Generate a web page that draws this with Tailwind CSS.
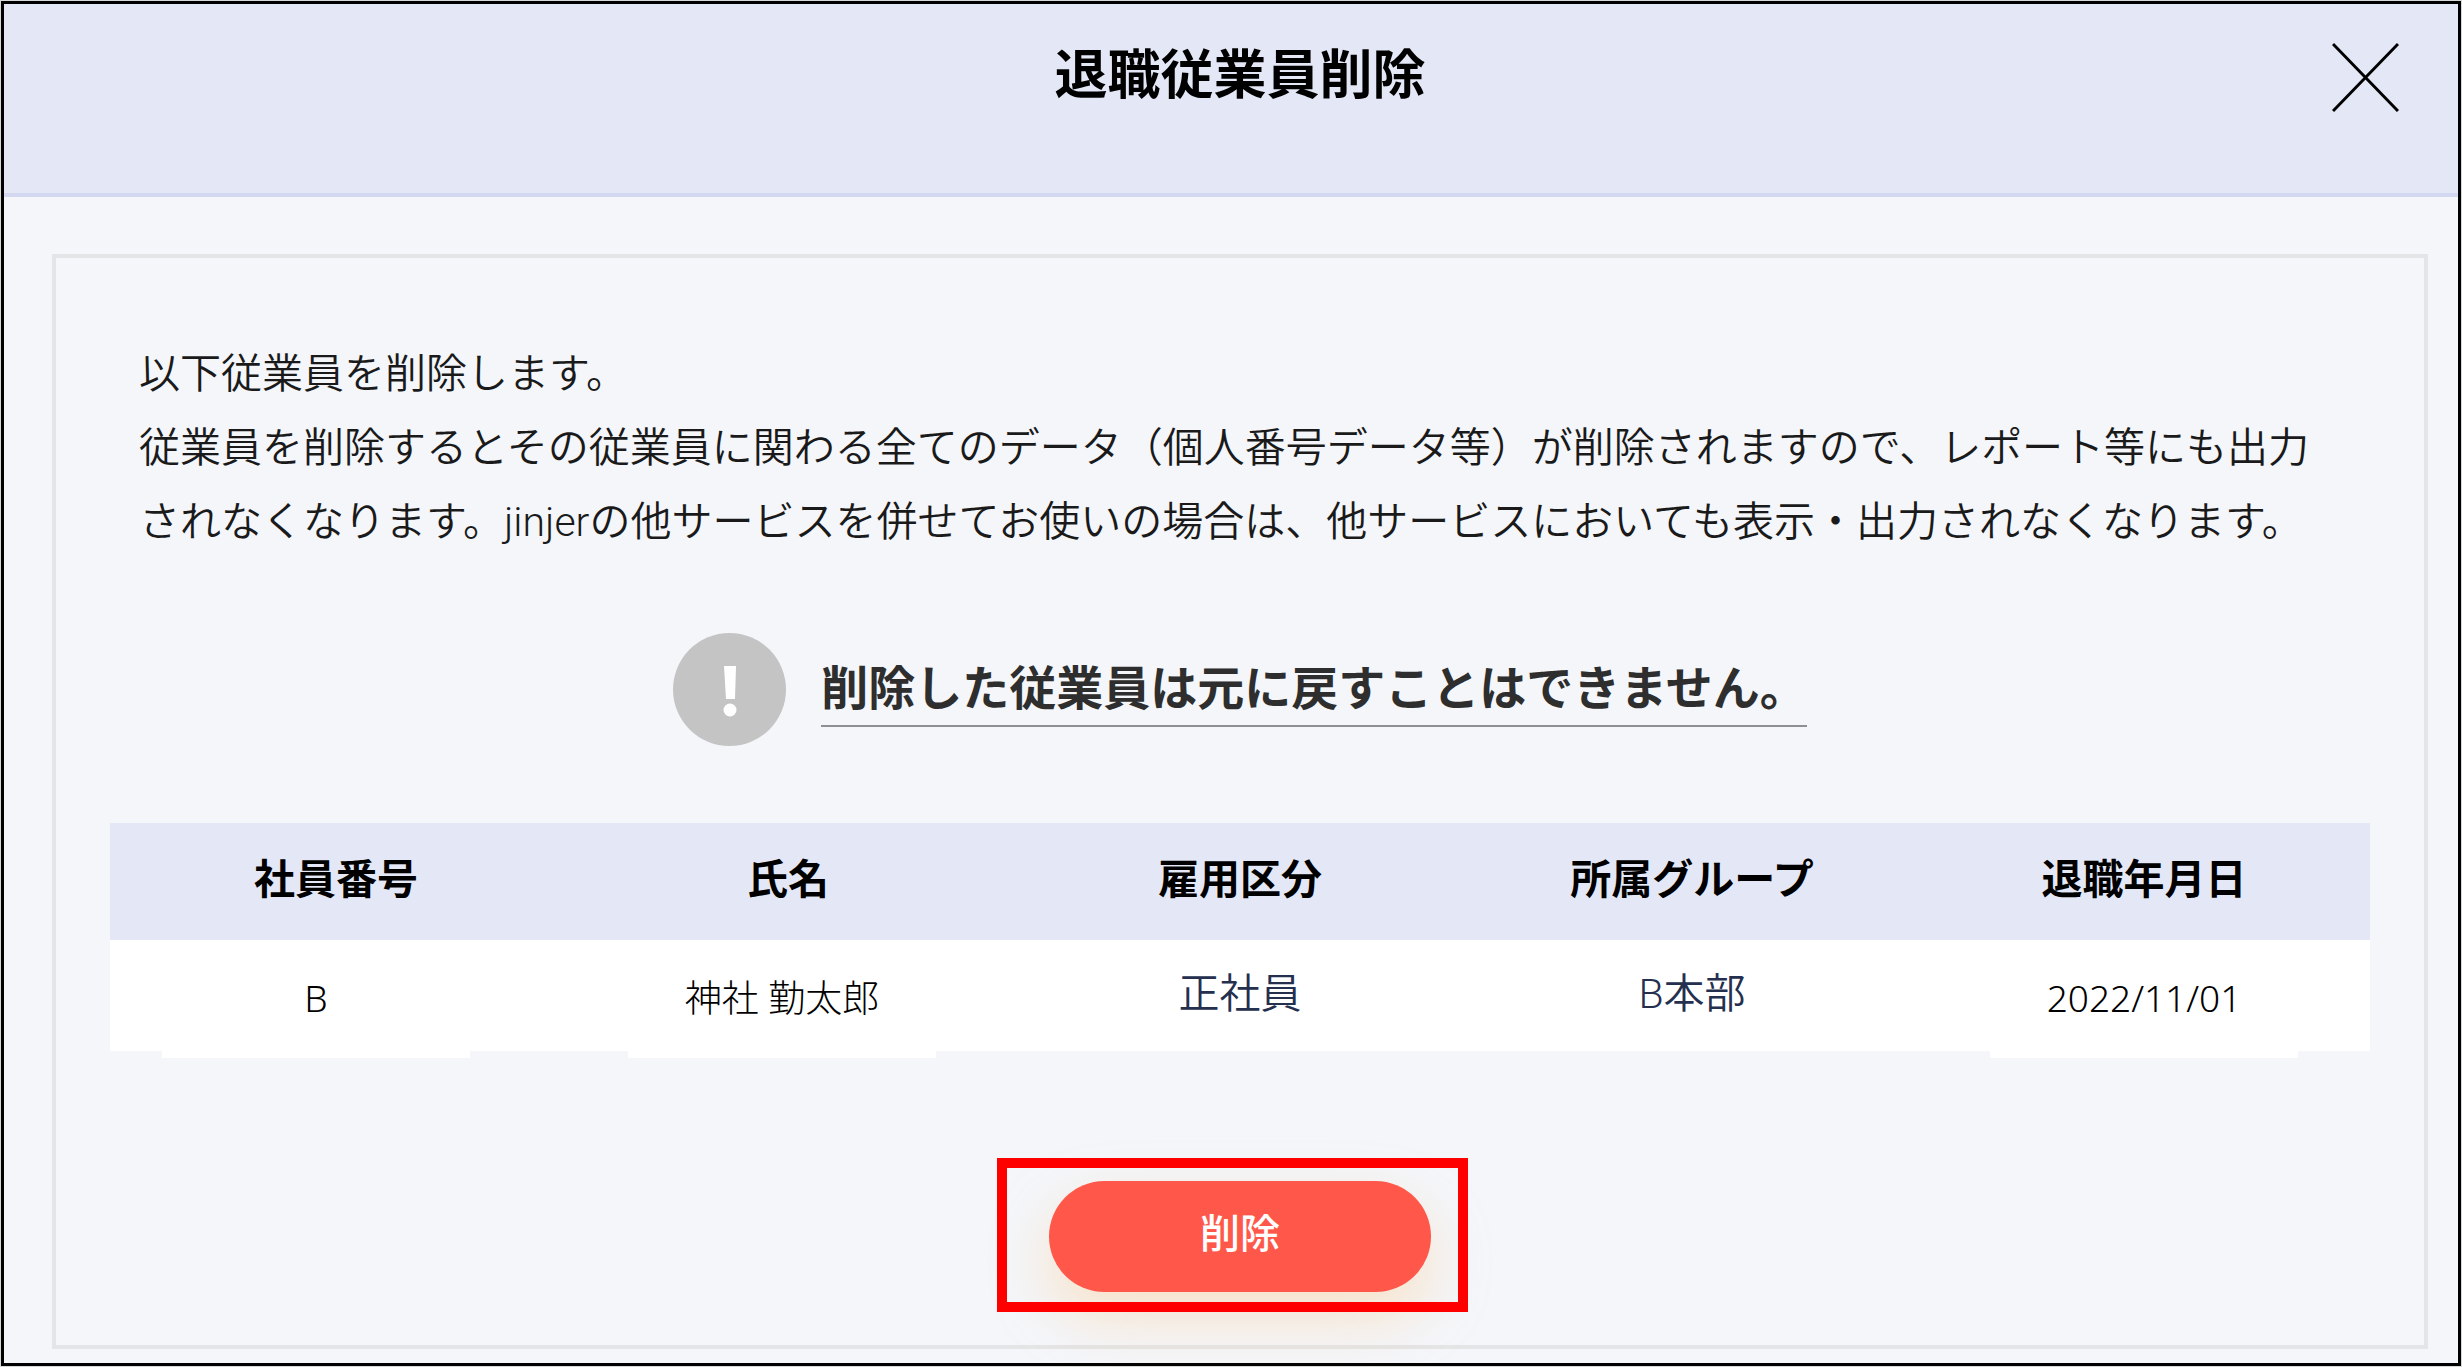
<!DOCTYPE html>
<html lang="ja">
<head>
    <meta charset="UTF-8">
    <meta name="viewport" content="width=device-width, initial-scale=1.0">
    <title>退職従業員削除</title>
    <script src="https://cdn.jsdelivr.net/npm/@tailwindcss/browser@4"></script>
    <style>
        body {
            font-family: Roboto, 'Noto Sans CJK JP', sans-serif;
        }
        .font-jp {
            font-family: 'Noto Sans', 'Noto Sans CJK JP', sans-serif;
        }
    </style>
</head>
<body class="bg-[#d5dad8] p-px min-h-screen flex flex-col text-black">

    <div class="flex-1 flex flex-col border-3 border-black bg-[#f4f6fa]">

        <!-- Header -->
        <header class="relative h-[193px] pt-[34px] pl-12 pr-[30px] bg-[#e4e8f6] border-b-4 border-[#d3d7ef]">
            <h1 class="text-center text-[53px] leading-[76px] font-bold">退職従業員削除</h1>
            <button type="button" aria-label="閉じる" class="absolute top-[38px] right-[59px] w-[67px] h-[70px] cursor-pointer">
                <svg class="w-full h-full" viewBox="0 0 67 70" fill="none" stroke="#000" stroke-width="3">
                    <path d="M1 2L66 69M66 2L1 69"/>
                </svg>
            </button>
        </header>

        <!-- Content -->
        <main class="ml-12 mr-[30px] mt-[57px] mb-[14px] px-[54px] pt-[79px] pb-[53px] border-4 border-[#e4e5e6]">
            <p class="px-[29px] text-[41px] leading-[74px] font-[350] text-[#1a1a1a]">
                以下従業員を削除します。<br>
                従業員を削除するとその従業員に関わる全てのデータ（個人番号データ等）が削除されますので、レポート等にも出力されなくなります。jinjerの他サービスを併せてお使いの場合は、他サービスにおいても表示・出力されなくなります。
            </p>

            <div class="mt-[74px] flex justify-center items-center gap-[35px]">
                <svg class="w-[113px] h-[113px]" viewBox="0 0 113 113" aria-hidden="true">
                    <circle cx="56.5" cy="56.5" r="56.5" fill="#c4c4c4"/>
                    <path d="M51 33h12l-1 33h-9z" fill="#fff"/>
                    <circle cx="57" cy="77" r="6.500" fill="#fff"/>
                </svg>
                <strong class="border-b-2 border-[#8e8f91] text-[47px] leading-[72px] font-bold text-[#2e2e2e]">削除した従業員は元に戻すことはできません。</strong>
            </div>

            <table class="mt-[77px] w-full table-fixed text-center">
                <thead>
                    <tr class="h-[117px] bg-[#e4e8f6] text-[41px] leading-[60px]">
                        <th class="pb-1 font-bold">社員番号</th>
                        <th class="pb-1 font-bold">氏名</th>
                        <th class="pb-1 font-bold">雇用区分</th>
                        <th class="pb-1 font-bold">所属グループ</th>
                        <th class="pb-1 font-bold">退職年月日</th>
                    </tr>
                </thead>
                <tbody>
                    <tr class="h-[111px] bg-white text-[41px] leading-[60px] font-[350] text-[#25304f]">
                        <td class="relative">
                            <span class="absolute top-0 left-[52px] w-[308px] h-[118px] bg-white font-jp font-light text-[37px] leading-[116px] text-black">B</span>
                        </td>
                        <td class="relative">
                            <span class="absolute top-0 left-[66px] w-[308px] h-[118px] bg-white font-jp font-light text-[37px] leading-[116px] text-black">神社 勤太郎</span>
                        </td>
                        <td class="pb-1">正社員</td>
                        <td class="pb-1">B本部</td>
                        <td class="relative">
                            <span class="absolute top-0 left-[72px] w-[308px] h-[118px] bg-white font-jp font-light text-[37px] leading-[116px] text-black">2022/11/01</span>
                        </td>
                    </tr>
                </tbody>
            </table>

            <div class="mt-[130px] flex justify-center">
                <button type="button" class="relative w-[382px] h-[111px] pb-1 rounded-full bg-[#ff584a] text-white text-[40px] leading-[60px] font-medium shadow-[0_25px_60px_rgba(255,190,110,0.35)] cursor-pointer">
                    削除
                    <span class="absolute -top-[23px] -bottom-5 -left-[52px] -right-[37px] border-10 border-[#ff0000] pointer-events-none"></span>
                </button>
            </div>
        </main>
    </div>

</body>
</html>
